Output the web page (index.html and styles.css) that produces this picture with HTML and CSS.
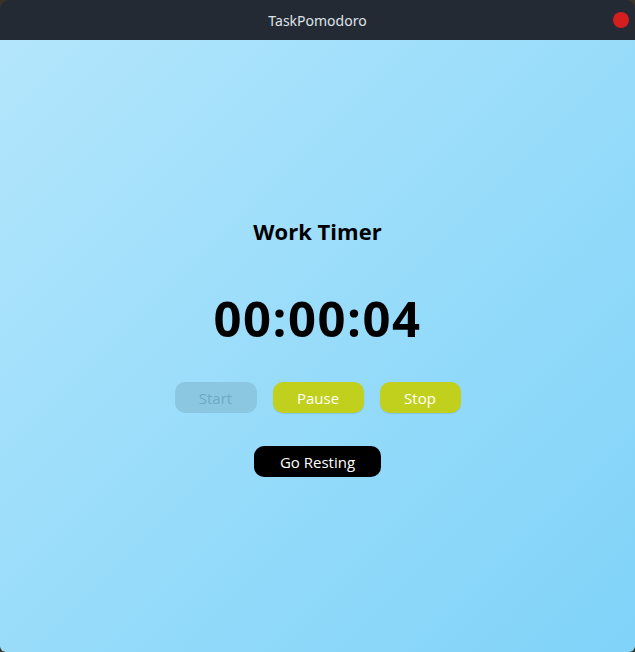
FILE: index.html
```html
<!DOCTYPE html>
<html>
<head>
<meta charset="utf-8">
<link rel="stylesheet" href="styles.css">
</head>
<body>
<div class="window">
  <header class="titlebar">
    <span class="title">TaskPomodoro</span>
    <span class="close"></span>
  </header>
  <main class="content">
    <h1 class="heading">Work Timer</h1>
    <div class="time">00:00:04</div>
    <div class="controls">
      <button class="btn btn-start" disabled>Start</button>
      <button class="btn btn-pause">Pause</button>
      <button class="btn btn-stop">Stop</button>
    </div>
    <button class="btn btn-rest">Go Resting</button>
  </main>
</div>
</body>
</html>
```
FILE: styles.css
```css
html, body {
  margin: 0;
  padding: 0;
  width: 635px;
  height: 652px;
  background: #3a3326;
  overflow: hidden;
}
.window {
  width: 635px;
  height: 652px;
  display: flex;
  flex-direction: column;
  border-radius: 9px 9px 6px 6px;
  overflow: hidden;
  font-family: "Open Sans", "Noto Sans", sans-serif;
}
.titlebar {
  height: 40px;
  flex: 0 0 40px;
  background: #232a34;
  display: flex;
  align-items: center;
  justify-content: center;
  position: relative;
}
.title {
  color: #dfe3e8;
  font-size: 14px;
  font-family: "Noto Sans", sans-serif;
}
.close {
  position: absolute;
  right: 6px;
  top: 12px;
  width: 16px;
  height: 16px;
  border-radius: 50%;
  background: #d51e20;
}
.content {
  flex: 1;
  background: linear-gradient(135deg, #b3e6fc 0%, #98dcfa 50%, #80d3f9 100%);
  display: flex;
  flex-direction: column;
  align-items: center;
  padding-top: 176px;
}
.heading {
  margin: 0;
  font-size: 22px;
  font-weight: 700;
  color: #000;
  line-height: 30px;
  height: 30px;
}
.time {
  margin-top: 44px;
  font-size: 49px;
  font-weight: 700;
  line-height: 56px;
  letter-spacing: 1.5px;
  color: #000;
}
.controls {
  margin-top: 36px;
  display: flex;
  gap: 16px;
}
.btn {
  border: none;
  height: 31px;
  border-radius: 10px;
  font-family: "Open Sans", "Noto Sans", sans-serif;
  font-size: 15px;
  padding: 0;
  color: #ffffff;
}
.btn-start {
  width: 82px;
  background: #8cc7e2;
  color: #6ea9c6;
}
.btn-pause {
  width: 91px;
  background: #c1d01c;
  box-shadow: 0 1px 1px rgba(0,0,0,0.1);
}
.btn-stop {
  width: 81px;
  background: #c1d01c;
  box-shadow: 0 1px 1px rgba(0,0,0,0.1);
}
.btn-rest {
  margin-top: 33px;
  width: 127px;
  background: #000;
  color: #fff;
}
```
